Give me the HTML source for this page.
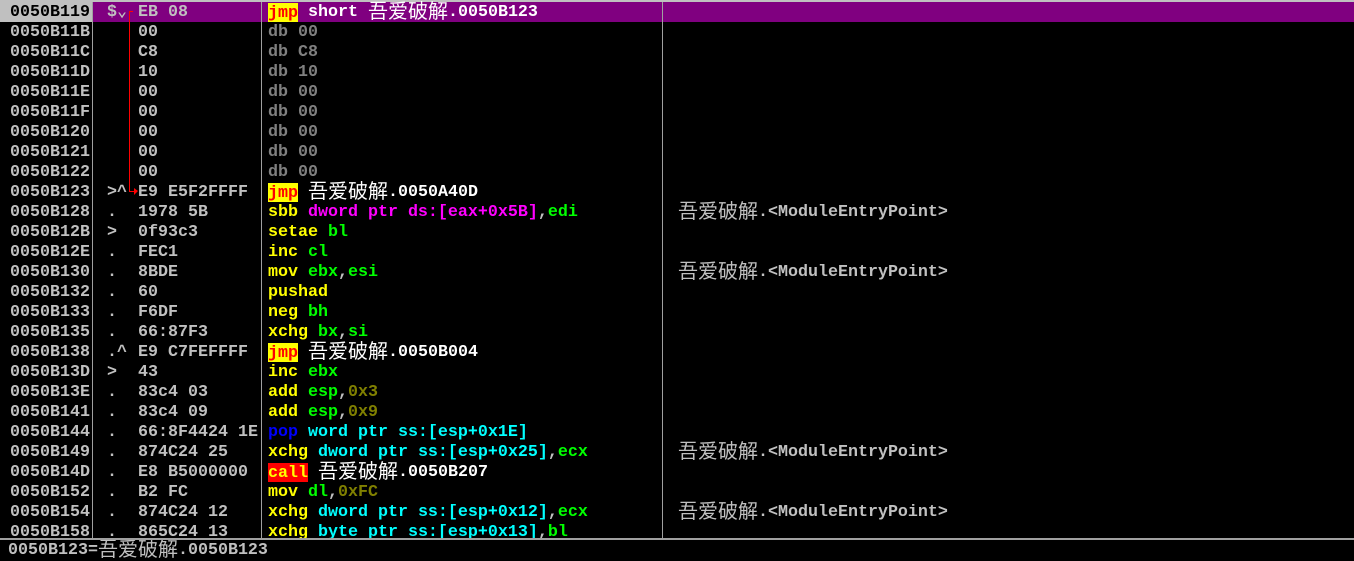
<!DOCTYPE html>
<html><head><meta charset="utf-8"><style>
html,body{margin:0;height:561px;overflow:hidden}
body{background:#000;width:1354px;position:relative;font-family:"Liberation Mono","Noto Sans CJK SC",monospace;font-weight:bold;font-size:16.67px;}
.top{position:absolute;left:0;top:0;width:1354px;height:2px;background:#c0c0c0}
.r{position:absolute;left:0;width:1354px;height:20px;line-height:22px;white-space:pre;color:#c0c0c0}
.r span{position:absolute;top:0}
.r span span,.r span b{position:static}
.a{left:10px}.m{left:107px}.h{left:138px}.d{left:268px}.c{left:678px}
.sel{background:#800080}
.addsel{position:absolute;left:0;top:0;width:92px;height:20px;background:#c0c0c0}
.vl{position:absolute;top:2px;width:1px;height:536px;background:#a0a0a0}
.y{color:#ffff00}.g{color:#00ff00}.p{color:#ff00ff}.cy{color:#00ffff}.o{color:#808000}.gr{color:#808080}.b{color:#0000ff}
.k{font-weight:normal;font-size:20px;line-height:0;font-family:"Noto Sans CJK SC",sans-serif}
.r .k,.status .k{position:relative;top:2px}
.wt{color:#fff}
.jmp{background:#ffff00;color:#ff0000;display:inline-block;height:19px;line-height:21px;vertical-align:top;margin-top:1px}
.call{background:#ff0000;color:#ffff00;display:inline-block;height:19px;line-height:21px;vertical-align:top;margin-top:1px}
.status{position:absolute;left:0;top:538px;width:1354px;height:23px;overflow:hidden;background:#000;border-top:2px solid #a0a0a0;box-sizing:border-box;color:#c0c0c0;line-height:22px;padding-left:8px;white-space:pre}
</style></head><body>
<div class="top"></div>
<div class="r sel" style="top:2px"><div class="addsel"></div><span class="a" style="color:#000">0050B119</span><span class="m">$⌄</span><span class="h">EB 08</span><span class="d wt"><b class="jmp">jmp</b> short <span class="k">吾爱破解</span>.0050B123</span></div>
<div class="r" style="top:22px"><span class="a">0050B11B</span><span class="h">00</span><span class="d gr">db 00</span></div>
<div class="r" style="top:42px"><span class="a">0050B11C</span><span class="h">C8</span><span class="d gr">db C8</span></div>
<div class="r" style="top:62px"><span class="a">0050B11D</span><span class="h">10</span><span class="d gr">db 10</span></div>
<div class="r" style="top:82px"><span class="a">0050B11E</span><span class="h">00</span><span class="d gr">db 00</span></div>
<div class="r" style="top:102px"><span class="a">0050B11F</span><span class="h">00</span><span class="d gr">db 00</span></div>
<div class="r" style="top:122px"><span class="a">0050B120</span><span class="h">00</span><span class="d gr">db 00</span></div>
<div class="r" style="top:142px"><span class="a">0050B121</span><span class="h">00</span><span class="d gr">db 00</span></div>
<div class="r" style="top:162px"><span class="a">0050B122</span><span class="h">00</span><span class="d gr">db 00</span></div>
<div class="r" style="top:182px"><span class="a">0050B123</span><span class="m">&gt;^</span><span class="h">E9 E5F2FFFF</span><span class="d wt"><b class="jmp">jmp</b> <span class="k">吾爱破解</span>.0050A40D</span></div>
<div class="r" style="top:202px"><span class="a">0050B128</span><span class="m">.</span><span class="h">1978 5B</span><span class="d"><span class="y">sbb </span><span class="p">dword ptr ds:[eax+0x5B]</span>,<span class="g">edi</span></span><span class="c"><span class="k">吾爱破解</span>.&lt;ModuleEntryPoint&gt;</span></div>
<div class="r" style="top:222px"><span class="a">0050B12B</span><span class="m">&gt;</span><span class="h">0f93c3</span><span class="d"><span class="y">setae </span><span class="g">bl</span></span></div>
<div class="r" style="top:242px"><span class="a">0050B12E</span><span class="m">.</span><span class="h">FEC1</span><span class="d"><span class="y">inc </span><span class="g">cl</span></span></div>
<div class="r" style="top:262px"><span class="a">0050B130</span><span class="m">.</span><span class="h">8BDE</span><span class="d"><span class="y">mov </span><span class="g">ebx</span>,<span class="g">esi</span></span><span class="c"><span class="k">吾爱破解</span>.&lt;ModuleEntryPoint&gt;</span></div>
<div class="r" style="top:282px"><span class="a">0050B132</span><span class="m">.</span><span class="h">60</span><span class="d y">pushad</span></div>
<div class="r" style="top:302px"><span class="a">0050B133</span><span class="m">.</span><span class="h">F6DF</span><span class="d"><span class="y">neg </span><span class="g">bh</span></span></div>
<div class="r" style="top:322px"><span class="a">0050B135</span><span class="m">.</span><span class="h">66:87F3</span><span class="d"><span class="y">xchg </span><span class="g">bx</span>,<span class="g">si</span></span></div>
<div class="r" style="top:342px"><span class="a">0050B138</span><span class="m">.^</span><span class="h">E9 C7FEFFFF</span><span class="d wt"><b class="jmp">jmp</b> <span class="k">吾爱破解</span>.0050B004</span></div>
<div class="r" style="top:362px"><span class="a">0050B13D</span><span class="m">&gt;</span><span class="h">43</span><span class="d"><span class="y">inc </span><span class="g">ebx</span></span></div>
<div class="r" style="top:382px"><span class="a">0050B13E</span><span class="m">.</span><span class="h">83c4 03</span><span class="d"><span class="y">add </span><span class="g">esp</span>,<span class="o">0x3</span></span></div>
<div class="r" style="top:402px"><span class="a">0050B141</span><span class="m">.</span><span class="h">83c4 09</span><span class="d"><span class="y">add </span><span class="g">esp</span>,<span class="o">0x9</span></span></div>
<div class="r" style="top:422px"><span class="a">0050B144</span><span class="m">.</span><span class="h">66:8F4424 1E</span><span class="d"><span class="b">pop </span><span class="cy">word ptr ss:[esp+0x1E]</span></span></div>
<div class="r" style="top:442px"><span class="a">0050B149</span><span class="m">.</span><span class="h">874C24 25</span><span class="d"><span class="y">xchg </span><span class="cy">dword ptr ss:[esp+0x25]</span>,<span class="g">ecx</span></span><span class="c"><span class="k">吾爱破解</span>.&lt;ModuleEntryPoint&gt;</span></div>
<div class="r" style="top:462px"><span class="a">0050B14D</span><span class="m">.</span><span class="h">E8 B5000000</span><span class="d wt"><b class="call">call</b> <span class="k">吾爱破解</span>.0050B207</span></div>
<div class="r" style="top:482px"><span class="a">0050B152</span><span class="m">.</span><span class="h">B2 FC</span><span class="d"><span class="y">mov </span><span class="g">dl</span>,<span class="o">0xFC</span></span></div>
<div class="r" style="top:502px"><span class="a">0050B154</span><span class="m">.</span><span class="h">874C24 12</span><span class="d"><span class="y">xchg </span><span class="cy">dword ptr ss:[esp+0x12]</span>,<span class="g">ecx</span></span><span class="c"><span class="k">吾爱破解</span>.&lt;ModuleEntryPoint&gt;</span></div>
<div class="r" style="top:522px;height:16px;overflow:hidden"><span class="a">0050B158</span><span class="m">.</span><span class="h">865C24 13</span><span class="d"><span class="y">xchg </span><span class="cy">byte ptr ss:[esp+0x13]</span>,<span class="g">bl</span></span></div>
<div class="vl" style="left:92px"></div>
<div class="vl" style="left:261px"></div>
<div class="vl" style="left:662px"></div>
<div style="position:absolute;z-index:5;left:129px;top:12px;width:1px;height:180px;background:#ff0000"></div>
<div style="position:absolute;z-index:5;left:129px;top:191px;width:7px;height:1px;background:#ff0000"></div>
<div style="position:absolute;z-index:5;left:134px;top:188px;width:0;height:0;border-left:4px solid #ff0000;border-top:3px solid transparent;border-bottom:4px solid transparent"></div>
<div style="position:absolute;z-index:5;left:129px;top:11px;width:4px;height:1px;background:#ff0000"></div>
<div class="status">0050B123=<span class="k">吾爱破解</span>.0050B123</div>
</body></html>
